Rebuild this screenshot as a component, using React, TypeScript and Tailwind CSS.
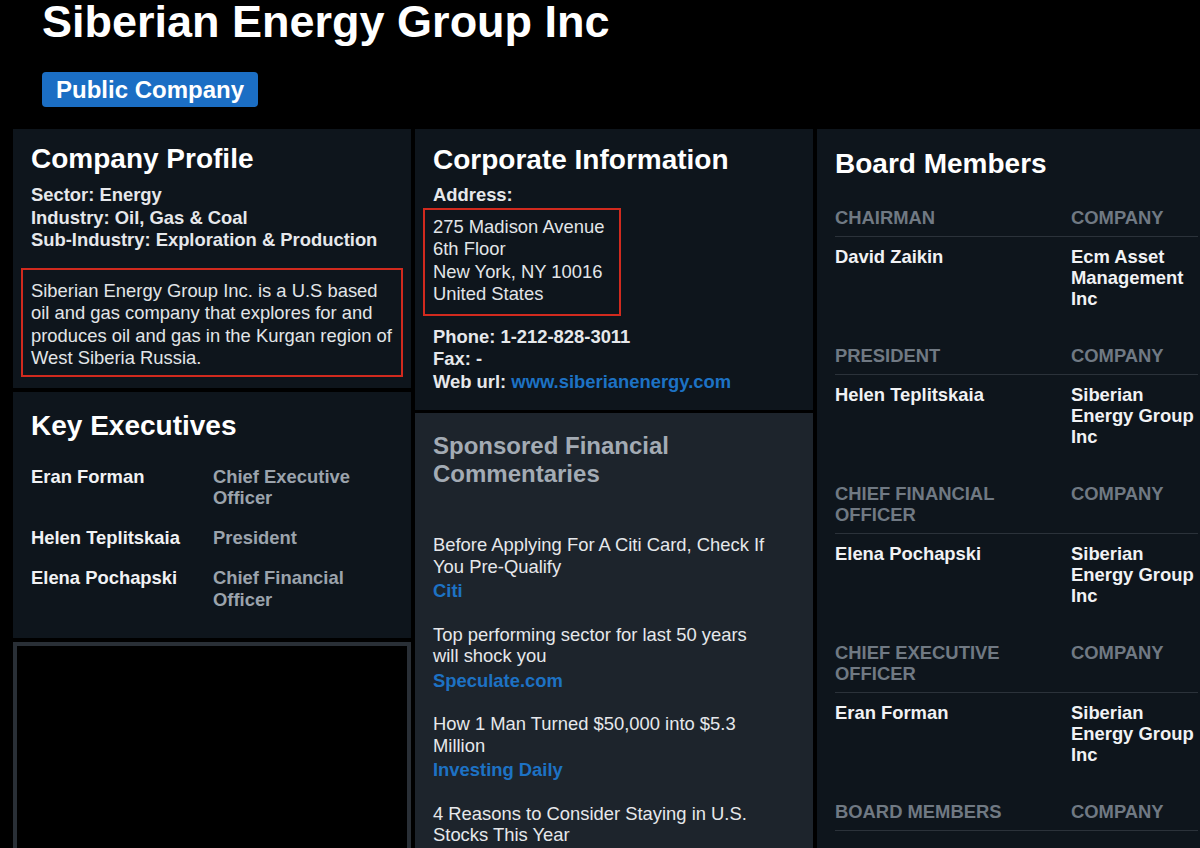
// Company overview page: header, profile, executives, corporate info, sponsored links, board table
import React from 'react';

const executives = [
  { name: 'Eran Forman', title: 'Chief Executive Officer' },
  { name: 'Helen Teplitskaia', title: 'President' },
  { name: 'Elena Pochapski', title: 'Chief Financial Officer' },
];

const sponsored: { title: string; source?: string }[] = [
  { title: 'Before Applying For A Citi Card, Check If You Pre-Qualify', source: 'Citi' },
  { title: 'Top performing sector for last 50 years will shock you', source: 'Speculate.com' },
  { title: 'How 1 Man Turned $50,000 into $5.3 Million', source: 'Investing Daily' },
  { title: '4 Reasons to Consider Staying in U.S. Stocks This Year' },
];

const board: { role: string; name?: string; company?: string }[] = [
  { role: 'Chairman', name: 'David Zaikin', company: 'Ecm Asset Management Inc' },
  { role: 'President', name: 'Helen Teplitskaia', company: 'Siberian Energy Group Inc' },
  { role: 'Chief Financial Officer', name: 'Elena Pochapski', company: 'Siberian Energy Group Inc' },
  { role: 'Chief Executive Officer', name: 'Eran Forman', company: 'Siberian Energy Group Inc' },
  { role: 'Board Members' },
];

function Heading({ children }: { children: React.ReactNode }) {
  return <h2 className="text-[28px] leading-[34px] font-bold text-white">{children}</h2>;
}

export default function App() {
  return (
    <div className="h-[848px] overflow-hidden bg-black font-['Liberation_Sans',Arial,sans-serif]">
      <div className="pl-[42px]">
        <h1 className="text-[45px] leading-[44px] font-bold text-white whitespace-nowrap">
          Siberian Energy Group Inc
        </h1>
        <div className="mt-[28px] inline-block h-[35px] rounded-[4px] bg-[#1b6ec4] px-[14px] text-[24px] leading-[35px] font-bold text-white">
          Public Company
        </div>
      </div>

      <div className="mt-[22px] flex gap-[4px] pl-[13px]">
        {/* left column */}
        <div className="flex w-[398px] shrink-0 flex-col gap-[4px]">
          <div className="bg-[#0e151c] px-[18px] pt-[13px] pb-[11px]">
            <Heading>Company Profile</Heading>
            <div className="mt-[8px] text-[18.4px] leading-[22.5px] font-bold text-[#e6e8eb]">
              <div>Sector: Energy</div>
              <div>Industry: Oil, Gas &amp; Coal</div>
              <div>Sub-Industry: Exploration &amp; Production</div>
            </div>
            <div className="-mx-[10px] mt-[16px] border-2 border-[#d12a1e] pt-[10px] pr-[4px] pb-[5px] pl-[8px] text-[18.4px] leading-[22.5px] text-[#e2e5e8]">
              Siberian Energy Group Inc. is a U.S based oil and gas company that explores for and produces oil and gas in the Kurgan region of West Siberia Russia.
            </div>
          </div>

          <div className="bg-[#0e151c] px-[18px] pt-[17px] pb-[28px]">
            <Heading>Key Executives</Heading>
            <div className="mt-[23px] flex flex-col gap-[18.5px] text-[18.4px] leading-[21.5px] font-bold">
              {executives.map(e => (
                <div key={e.name} className="grid grid-cols-[182px_1fr]">
                  <div className="text-[#f1f2f4]">{e.name}</div>
                  <div className="text-[#9ba3ac]">{e.title}</div>
                </div>
              ))}
            </div>
          </div>

          <div className="h-[260px] border-4 border-[#292f36] bg-black" />
        </div>

        {/* middle column */}
        <div className="flex w-[398px] shrink-0 flex-col gap-[3px]">
          <div className="bg-[#0e151c] px-[18px] pt-[14px] pb-[17px]">
            <Heading>Corporate Information</Heading>
            <div className="mt-[7px] text-[18.4px] leading-[22.5px] font-bold text-[#e6e8eb]">Address:</div>
            <div className="-ml-[10px] mt-[1px] w-[198px] border-2 border-[#d12a1e] pt-[6px] pb-[8px] pl-[8px] text-[18.4px] leading-[22.5px] text-[#e2e5e8]">
              <div>275 Madison Avenue</div>
              <div>6th Floor</div>
              <div>New York, NY 10016</div>
              <div>United States</div>
            </div>
            <div className="mt-[10px] text-[18.4px] leading-[22.5px] font-bold text-[#e6e8eb]">
              <div>Phone: 1-212-828-3011</div>
              <div>Fax: -</div>
              <div>
                Web url: <span className="text-[#1d72c4]">www.siberianenergy.com</span>
              </div>
            </div>
          </div>

          <div className="h-[500px] bg-[#1d242c] px-[18px] pt-[19px]">
            <h2 className="text-[24px] leading-[28px] font-bold text-[#a3abb4]">
              Sponsored Financial Commentaries
            </h2>
            <div className="mt-[46px] flex w-[340px] flex-col gap-[21.5px]">
              {sponsored.map(s => (
                <div key={s.title}>
                  <div className="text-[18.4px] leading-[21.5px] text-[#e6e8eb]">{s.title}</div>
                  {s.source && (
                    <div className="mt-[3px] text-[18.4px] leading-[22px] font-bold text-[#1d72c4]">{s.source}</div>
                  )}
                </div>
              ))}
            </div>
          </div>
        </div>

        {/* right column */}
        <div className="h-[760px] w-[399px] shrink-0 bg-[#0e151c] px-[18px] pt-[18px]">
          <Heading>Board Members</Heading>
          <div className="mt-[26px] flex flex-col gap-[36px] text-[18.4px] leading-[21px] font-bold">
            {board.map(b => (
              <div key={b.role}>
                <div className="grid grid-cols-[236px_1fr] border-b border-[#2b323a] pb-[8px] uppercase text-[#707983]">
                  <div>{b.role}</div>
                  <div>Company</div>
                </div>
                {b.name && (
                  <div className="grid grid-cols-[236px_1fr] pt-[9px] text-[#f1f2f4]">
                    <div>{b.name}</div>
                    <div>{b.company}</div>
                  </div>
                )}
              </div>
            ))}
          </div>
        </div>
      </div>
    </div>
  );
}
